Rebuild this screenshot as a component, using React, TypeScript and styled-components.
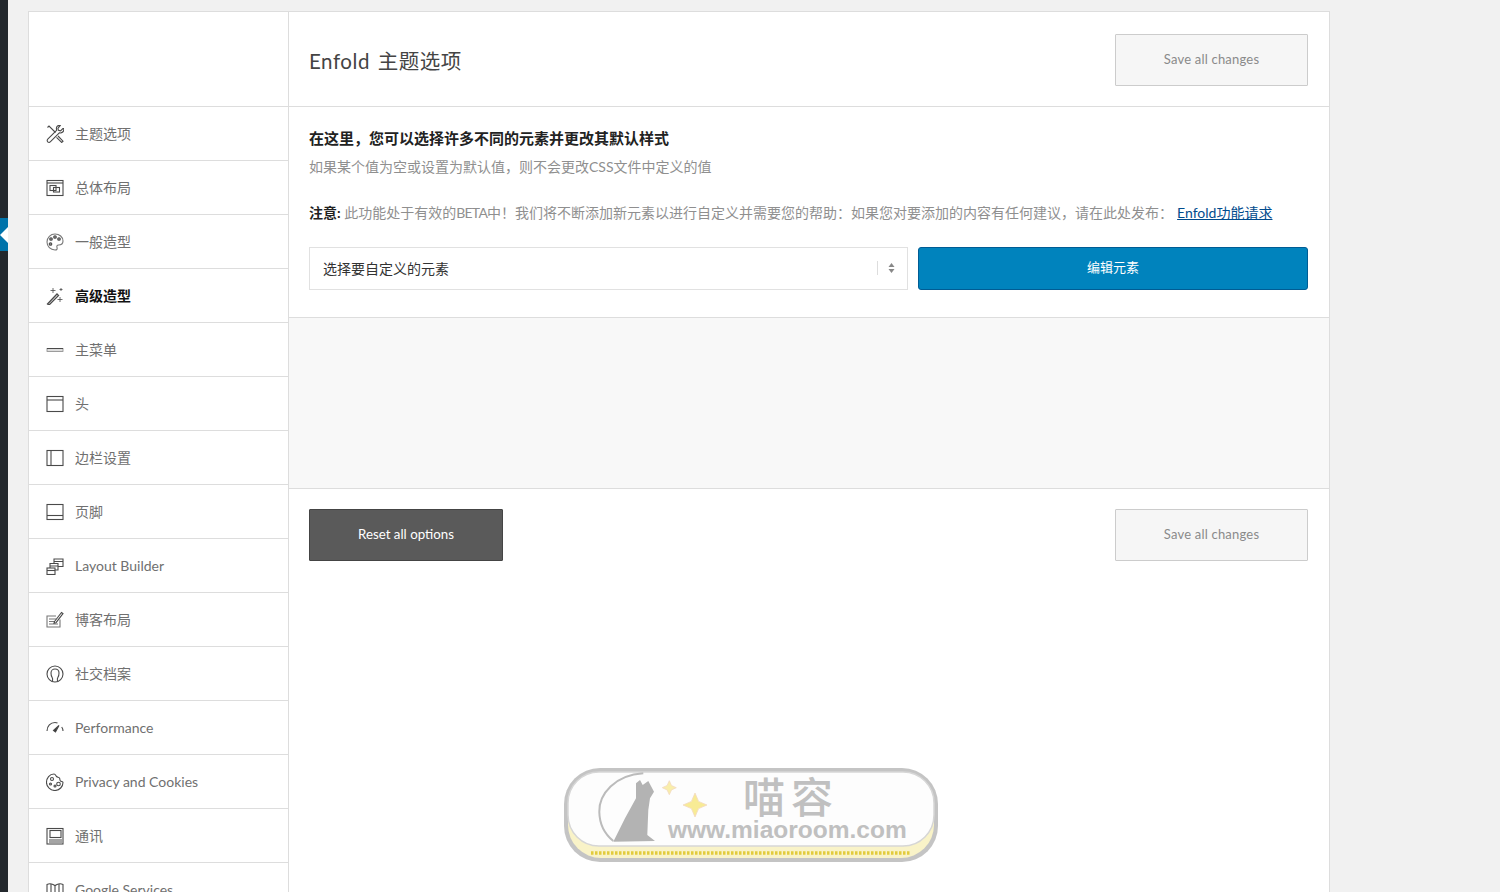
import React from "react";
import styled, { createGlobalStyle } from "styled-components";

const Global = createGlobalStyle`
  html, body { margin: 0; padding: 0; height: 892px; overflow: hidden; background: #f1f1f1; }
  body { font-family: Lato, "Noto Sans CJK SC", sans-serif; color: #666; }
  #root { height: 892px; }
`;
const Page = styled.div`display: flex; height: 892px; position: relative; overflow: hidden;`;
const AdminBar = styled.div`width: 8px; flex: none; background: #23282d; position: relative;`;
const ActiveTab = styled.div`
  position: absolute; left: 0; top: 218px; width: 8px; height: 33px; background: #0073aa;
  &::after { content: ""; position: absolute; left: 0; top: 9px; border: 8px solid transparent; border-left: 0; border-right: 8px solid #fff; }
`;
const Wrap = styled.div`flex: none; width: 1302px; margin: 11px 0 0 20px; display: flex; background: #fff; border: 1px solid #ddd; border-bottom: 0; height: 881px; box-sizing: border-box; overflow: hidden;`;
const Sidebar = styled.nav`width: 259px; flex: none; border-right: 1px solid #ddd; display: flex; flex-direction: column;`;
const Logo = styled.div`height: 94px; flex: none; border-bottom: 1px solid #ddd;`;
const Row = styled.div<{ $active?: boolean }>`
  height: 53px; flex: none; border-bottom: 1px solid #ddd; display: flex; align-items: center; gap: 11px; padding-left: 17px;
  font-size: 14px; color: ${p => (p.$active ? "#111" : "#707070")}; font-weight: ${p => (p.$active ? 600 : 400)};
  svg { width: 18px; height: 18px; flex: none; fill: none; stroke: #4a4a4a; stroke-width: 1.1; }
`;
const RowLabel = styled.span<{ $cjk?: boolean }>`padding-bottom: ${p => (p.$cjk ? "2px" : "0")};`;
const Main = styled.main`flex: 1; display: flex; flex-direction: column; min-width: 0;`;
const Header = styled.header`height: 95px; box-sizing: border-box; padding: 22px 21px 0 20px; display: flex; justify-content: space-between; align-items: flex-start; border-bottom: 1px solid #ddd;`;
const Title = styled.h1`margin: 14px 0 0; font-size: 20.5px; font-weight: 400; color: #444; letter-spacing: .55px; line-height: 26px; word-spacing: 2px;`;
const SaveButton = styled.button`width: 193px; height: 52px; padding: 0 0 2px; background: #f6f6f6; border: 1px solid #ccc; border-radius: 1px; color: #8a8a8a; font: 13px Lato, sans-serif; letter-spacing: .2px;`;
const Content = styled.section`height: 211px; box-sizing: border-box; padding: 21px 21px 0 20px; border-bottom: 1px solid #ddd;`;
const Lead = styled.h2`margin: 0; font-size: 15px; line-height: 20px; font-weight: 700; color: #222;`;
const Desc = styled.p`margin: 9px 0 0; font-size: 14px; line-height: 20px; color: #8f8f8f;`;
const Note = styled.p`margin: 26px 0 0; font-size: 14px; line-height: 20px; color: #8f8f8f; white-space: nowrap;`;
const NoteLabel = styled.strong`color: #222; font-weight: 700;`;
const Beta = styled.span`letter-spacing: -.75px;`;
const NoteLink = styled.a`color: #004b8d; text-decoration: underline; margin-left: 4px;`;
const Controls = styled.div`display: flex; gap: 10px; margin-top: 24px;`;
const Select = styled.div`width: 599px; height: 43px; box-sizing: border-box; border: 1px solid #e1e1e1; display: flex; align-items: center; justify-content: space-between; padding: 0 0 2px 13px; font-size: 14px; color: #333;`;
const SelectArrow = styled.span`
  width: 27px; height: 14px; padding-right: 2px; border-left: 1px solid #ddd; display: flex; align-items: center; justify-content: center;
  svg { width: 7px; height: 10px; fill: #888; }
`;
const EditButton = styled.button`width: 390px; height: 43px; padding: 0 0 4px; background: #0083bd; border: 1px solid #005c94; border-radius: 3px; color: #fff; font: 13px "Noto Sans CJK SC", sans-serif;`;
const Band = styled.div`height: 171px; box-sizing: border-box; background: #f8f8f8; border-bottom: 1px solid #ddd;`;
const Footer = styled.footer`padding: 20px 21px 0 20px; display: flex; justify-content: space-between;`;
const ResetButton = styled.button`width: 194px; height: 52px; padding: 0 0 3px; background: #5a5a5a; border: 1px solid #444; border-radius: 1px; color: #fff; font: 13.3px Lato, sans-serif;`;

const Watermark = styled.div`position: absolute; left: 563px; top: 766px; width: 376px; height: 98px;`;
const WatermarkArt = styled.svg`display: block; width: 376px; height: 98px;`;
const WatermarkTitle = styled.div`position: absolute; left: 180px; top: 9px; font: 500 42px/40px "Noto Sans CJK SC", sans-serif; letter-spacing: 6px; color: #c0c0c0; white-space: nowrap;`;
const WatermarkUrl = styled.div`position: absolute; left: 105px; top: 52px; font: 700 24.5px/24px "Liberation Sans", sans-serif; color: #c0c0c0; white-space: nowrap;`;

const icons: Record<string, React.ReactNode> = {
  tools: <><path d="M1.500 2.500 3 1l6.500 6.500M12 11l5 5.200-1.300 1.300-5.200-5.200" /><path d="M17 3.500l-2.500 2.400-2-.6-.6-2L14.200.6c-2-.6-4 .8-3.800 3 0 .7.2 1.200.4 1.600L2 13.900c-1 1-1 2-.3 2.900.9.8 2 .7 2.800-.1l8.800-8.900c2.600.8 5-1.500 4.500-4.300z" /></>,
  layout: <><rect x="1" y="1.500" width="16" height="15" /><path d="M1 4h16" /><rect x="4" y="6.500" width="6" height="5" /><rect x="7.500" y="8.500" width="6" height="4.500" /></>,
  palette: <><path d="M9 1c4.500 0 8 3 8 7 0 3.500-3 4-4.500 4-1.500 0-2 1-1.500 2.500.5 1.500 0 2.500-2 2.500-4.500 0-8-3.500-8-8s3.500-8 8-8z" stroke="#777" /><circle cx="5" cy="6" r="1.300" fill="#999" /><circle cx="9" cy="4" r="1.300" fill="#999" /><circle cx="13" cy="6" r="1.300" fill="#999" /><circle cx="4.500" cy="11" r="1.300" fill="#999" /></>,
  wand: <><path d="M1.500 17 11 7l1.500 1.500L3 18z" strokeWidth="1.300" /><path d="M7 1v5M4.500 3.500h5M15 1v3M13.500 2.500h3M14 10v5M11.500 12.500h5" strokeWidth=".8" /></>,
  menu: <><rect x="1" y="7.500" width="16" height="3" fill="#ddd" stroke="#888" strokeWidth=".8" /><path d="M1 7.500h16" strokeWidth="1" /></>,
  header: <><rect x="1" y="1.500" width="16" height="15" /><path d="M1 5h16" /></>,
  sidebar: <><rect x="1" y="1.500" width="16" height="15" /><path d="M5 1.500v15" /></>,
  footer: <><rect x="1" y="1.500" width="16" height="15" /><path d="M1 12.500h16" /></>,
  builder: <><rect x="1" y="11" width="8" height="6.500" /><path d="M1 13.500h8" /><path d="M4 11V6.500h8V13H9M4 9h8" /><path d="M8 6.500V2h9v7.500h-5M8 4.500h9" /></>,
  blog: <><path d="M14 8.500V16H1V5h9" stroke="#777" /><path d="M3 8h7M3 10.500h6M3 13h9" stroke="#777" /><path d="M8.500 10.500 15.500 1.500l1.500 1.200-7 9-2 .6z" /></>,
  social: <><circle cx="9" cy="9" r="8" /><path d="M6.500 16c.3-1.500.5-2.500-.4-3.700C5 11 5 9.500 5 8c0-2.500 1.800-4 4-4s4 1.500 4 4c0 1.500 0 3-1.100 4.300-.9 1.200-.7 2.200-.4 3.700" /></>,
  gauge: <><path d="M1 12c0-5 3.500-8.500 8-8.500 1 0 1.800.1 2.500.4M17 12c0-1.500-.5-2.900-1.300-4" /><path d="M7.500 11.500 13 6.500l-3.500 6.500z" fill="#333" /></>,
  cookie: <><path d="M8 1c1.500 0 1.500 1.500 2.500 2.500s2.300.4 3 1.500c.7 1.200 0 2 1 3 .8.7 2.500.3 2.500 1.500 0 4-3.500 8-8 8s-8.500-3.500-8.500-8S3.500 1 8 1z" /><circle cx="6" cy="6" r="1.500" /><circle cx="4.500" cy="11" r="1" /><circle cx="9" cy="13" r="1" /><circle cx="12.500" cy="11" r="1.800" /></>,
  news: <><rect x="1" y="1.500" width="16" height="15.500" /><rect x="4" y="3.500" width="11" height="7" /><path d="M3 13h13M3 15h13" /></>,
  map: <><path d="M1 3.500c2-1 4-1 6 0 1 .5 1.500 1 2 1s1-.5 2-1c2-1 4-1 6 0V16c-2-1-4-1-6 0-1 .5-1.500 1-2 1s-1-.5-2-1c-2-1-4-1-6 0z" /><path d="M9 4.500V17M5 3v12M13 3v12" /></>,
};

const items: { icon: string; label: string; active?: boolean; latin?: boolean }[] = [
  { icon: "tools", label: "主题选项" },
  { icon: "layout", label: "总体布局" },
  { icon: "palette", label: "一般造型" },
  { icon: "wand", label: "高级造型", active: true },
  { icon: "menu", label: "主菜单" },
  { icon: "header", label: "头" },
  { icon: "sidebar", label: "边栏设置" },
  { icon: "footer", label: "页脚" },
  { icon: "builder", label: "Layout Builder", latin: true },
  { icon: "blog", label: "博客布局" },
  { icon: "social", label: "社交档案" },
  { icon: "gauge", label: "Performance", latin: true },
  { icon: "cookie", label: "Privacy and Cookies", latin: true },
  { icon: "news", label: "通讯" },
  { icon: "map", label: "Google Services", latin: true },
];

export default function App() {
  return (
    <Page>
      <Global />
      <AdminBar><ActiveTab /></AdminBar>
      <Wrap>
        <Sidebar>
          <Logo />
          {items.map(it => (
            <Row key={it.label} $active={it.active}>
              <svg viewBox="0 0 18 18">{icons[it.icon]}</svg>
              <RowLabel $cjk={!it.latin}>{it.label}</RowLabel>
            </Row>
          ))}
        </Sidebar>
        <Main>
          <Header>
            <Title>Enfold 主题选项</Title>
            <SaveButton>Save all changes</SaveButton>
          </Header>
          <Content>
            <Lead>在这里，您可以选择许多不同的元素并更改其默认样式</Lead>
            <Desc>如果某个值为空或设置为默认值，则不会更改CSS文件中定义的值</Desc>
            <Note>
              <NoteLabel>注意:</NoteLabel> 此功能处于有效的<Beta>BETA</Beta>中！我们将不断添加新元素以进行自定义并需要您的帮助：如果您对要添加的内容有任何建议，请在此处发布：
              <NoteLink>Enfold功能请求</NoteLink>
            </Note>
            <Controls>
              <Select>
                <span>选择要自定义的元素</span>
                <SelectArrow>
                  <svg viewBox="0 0 7 10"><path d="M3.500 0 6.500 4h-6zM3.500 10 .5 6h6z" /></svg>
                </SelectArrow>
              </Select>
              <EditButton>编辑元素</EditButton>
            </Controls>
          </Content>
          <Band />
          <Footer>
            <ResetButton>Reset all options</ResetButton>
            <SaveButton>Save all changes</SaveButton>
          </Footer>
        </Main>
      </Wrap>
      <Watermark>
        <WatermarkArt viewBox="0 0 376 98">
          <rect x="1" y="2" width="374" height="94" rx="36" fill="#c4c4c4" />
          <rect x="5" y="6" width="366" height="86" rx="33" fill="#f9f3c8" />
          <path d="M28 87h320" stroke="#e2cb3c" strokeWidth="3.500" strokeDasharray="2.500 1.500" />
          <rect x="5" y="6" width="366" height="74" rx="31" fill="#fdfdfd" stroke="#d6d6d6" strokeWidth="1.500" />
          <path d="M80.300 7.300C52 9 36 28 36.300 45.700c.2 12 5 22 14 29.300" fill="none" stroke="#bbb" strokeWidth="2" />
          <path d="M50.300 75.700 62 52.300 73 32.300V17.300L77 14l2.700 5 5.600-4L91 25.700l-4 6.600L85.300 44l-1 25L92 75z" fill="#b3b3b3" />
          <path d="M106.300 14.700l2.200 4.800 4.800 2.200-4.800 2.200-2.200 4.800-2.200-4.800-4.800-2.200 4.800-2.200z" fill="#f9eeaa" stroke="#f2d9c2" strokeWidth=".8" />
          <path d="M132 27l3.600 8.400L144 39l-8.400 3.600L132 51l-3.600-8.400L120 39l8.400-3.600z" fill="#f8eb95" stroke="#f2d9c2" strokeWidth=".8" />
        </WatermarkArt>
        <WatermarkTitle>喵容</WatermarkTitle>
        <WatermarkUrl>www.miaoroom.com</WatermarkUrl>
      </Watermark>
    </Page>
  );
}
